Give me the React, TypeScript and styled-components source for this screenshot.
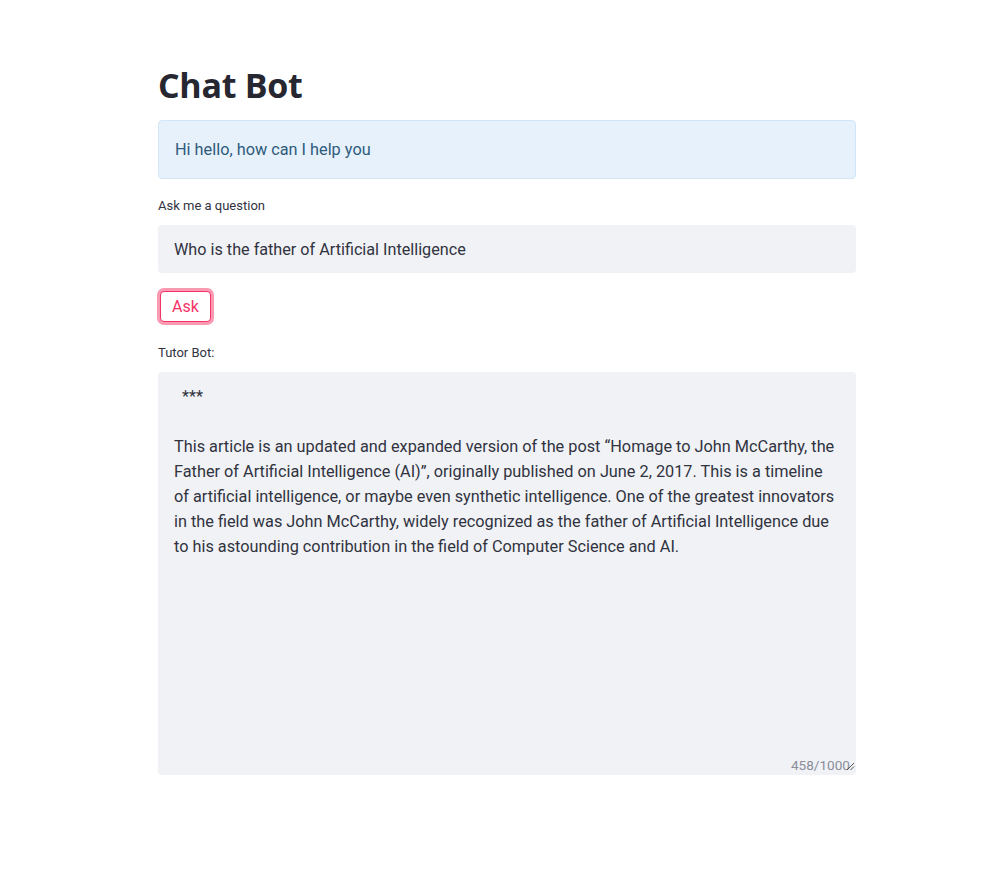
import React from "react";
import styled, { createGlobalStyle } from "styled-components";

const Global = createGlobalStyle`
  html, body { margin: 0; padding: 0; background: #ffffff; }
  body { font-family: Roboto, "Noto Sans", sans-serif; color: #31333f; }
`;

const Page = styled.main`
  width: 698px;
  margin-left: 158px;
  padding-top: 60px;
  display: flex;
  flex-direction: column;
`;

const Title = styled.h1`
  margin: 0;
  font-family: "Open Sans", "Noto Sans", sans-serif;
  font-weight: 700;
  font-size: 34px;
  line-height: 51px;
  color: #262730;
  letter-spacing: -0.3px;
`;

const InfoBox = styled.div`
  margin-top: 9px;
  box-sizing: border-box;
  height: 59px;
  display: flex;
  align-items: center;
  padding: 0 16px;
  background: #e6f1fb;
  border: 1px solid #d3e6f7;
  border-radius: 4px;
  color: #2f5b7c;
  font-size: 16.3px;
`;

const Field = styled.div<{ $top: number }>`
  margin-top: ${(p) => p.$top}px;
  display: flex;
  flex-direction: column;
`;

const Label = styled.label`
  font-size: 13px;
  line-height: 16px;
  color: #31333f;
  margin-bottom: 11px;
`;

const Input = styled.input`
  box-sizing: border-box;
  height: 48px;
  width: 100%;
  border: none;
  border-radius: 4px;
  background: #f0f2f6;
  padding: 0 16px;
  font-family: Roboto, "Noto Sans", sans-serif;
  font-size: 16.2px;
  color: #31333f;
  outline: none;
`;

const ButtonRow = styled.div`
  margin-top: 18px;
  display: flex;
  padding-left: 2px;
`;

const Button = styled.button`
  box-sizing: border-box;
  height: 31px;
  padding: 0 11px;
  background: #ffffff;
  border: 1px solid #f63366;
  border-radius: 4px;
  box-shadow: 0 0 0 3px rgba(246, 51, 102, 0.5);
  color: #f63366;
  font-family: Roboto, "Noto Sans", sans-serif;
  font-size: 16px;
  line-height: 29px;
  cursor: pointer;
`;

const AreaWrap = styled.div`
  position: relative;
`;

const TextArea = styled.textarea`
  box-sizing: border-box;
  display: block;
  width: 100%;
  height: 403px;
  border: none;
  border-radius: 4px;
  background: #f0f2f6;
  padding: 12px 16px;
  font-family: Roboto, "Noto Sans", sans-serif;
  font-size: 16.3px;
  line-height: 25px;
  color: #31333f;
  resize: none;
  outline: none;
`;

const Counter = styled.div`
  position: absolute;
  right: 1px;
  bottom: 2px;
  font-size: 13.6px;
  color: #8a8d99;
  display: flex;
  align-items: flex-end;
`;

const Grip = styled.svg`
  width: 9px;
  height: 9px;
  margin-left: -4px;
  margin-bottom: 2px;
`;

const answer =
  "  ***\n\nThis article is an updated and expanded version of the post “Homage to John McCarthy, the Father of Artificial Intelligence (AI)”, originally published on June 2, 2017. This is a timeline of artificial intelligence, or maybe even synthetic intelligence. One of the greatest innovators in the field was John McCarthy, widely recognized as the father of Artificial Intelligence due to his astounding contribution in the field of Computer Science and AI.";

export default function App() {
  return (
    <>
      <Global />
      <Page>
        <Title>Chat Bot</Title>
        <InfoBox>Hi hello, how can I help you</InfoBox>
        <Field $top={19}>
          <Label>Ask me a question</Label>
          <Input readOnly value="Who is the father of Artificial Intelligence" />
        </Field>
        <ButtonRow>
          <Button>Ask</Button>
        </ButtonRow>
        <Field $top={23}>
          <Label>Tutor Bot:</Label>
          <AreaWrap>
            <TextArea readOnly value={answer} />
            <Counter>
              458/1000
              <Grip viewBox="0 0 9 9">
                <path d="M1 8 L8 1 M4.5 8 L8 4.5" stroke="#444" strokeWidth="0.9" />
              </Grip>
            </Counter>
          </AreaWrap>
        </Field>
      </Page>
    </>
  );
}
